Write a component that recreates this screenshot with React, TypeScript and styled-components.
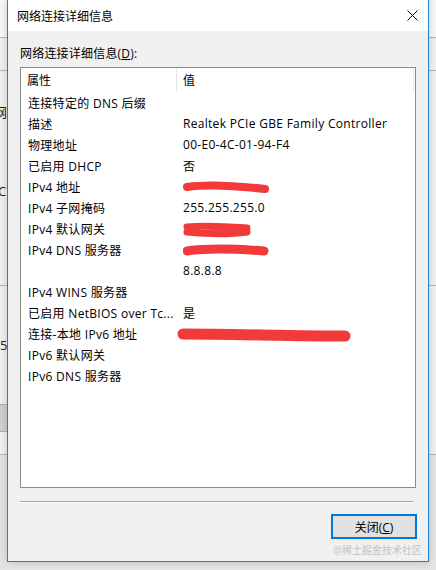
import React from "react";
import styled, { createGlobalStyle } from "styled-components";

const GlobalStyle = createGlobalStyle`
  html, body { margin: 0; padding: 0; }
  body {
    background: #ececec;
    font-family: "Open Sans", "Noto Sans CJK SC", sans-serif;
    font-size: 12px;
    color: #000;
  }
`;

const Desktop = styled.div`
  position: relative;
  width: 436px;
  height: 570px;
  overflow: hidden;
  background: #ececec;
`;

/* window lying behind the dialog */
const BackWindow = styled.div`
  position: absolute;
  inset: 0;
  display: flex;
  flex-direction: column;
  background: #f0f0f0;
`;

const BackBand = styled.div<{ $h: number; $bg?: string; $line?: boolean }>`
  height: ${(p) => p.$h}px;
  flex: none;
  background: ${(p) => p.$bg || "transparent"};
  border-bottom: ${(p) => (p.$line ? "1px solid #b4b4b4" : "none")};
  display: flex;
  align-items: center;
  font-size: 13px;
  color: #222;
  overflow: hidden;
  white-space: nowrap;
`;

const BackText = styled.span<{ $x: number }>`
  margin-left: ${(p) => p.$x}px;
`;

const BackButton = styled.div`
  margin-left: -4px;
  width: 10px;
  height: 26px;
  background: #d0d0d0;
  border: 1px solid #adadad;
`;

const Dialog = styled.div`
  position: absolute;
  left: 7px;
  top: -1px;
  width: 420px;
  height: 561px;
  border: 1px solid #1883d7;
  background: #f0f0f0;
  display: flex;
  flex-direction: column;
  box-shadow: 0 0 8px rgba(0, 0, 0, 0.18);
`;

const TitleBar = styled.div`
  height: 31px;
  flex: none;
  background: #fff;
  display: flex;
  align-items: center;
  justify-content: space-between;
  padding: 0 10px 0 9px;
`;

const Title = styled.span`
  font-size: 12px;
  color: #000;
`;

const CloseGlyph = styled.svg`
  width: 11px;
  height: 11px;
  display: block;
`;

const Body = styled.div`
  flex: 1;
  display: flex;
  flex-direction: column;
  padding: 15px 12px 0 12px;
  position: relative;
`;

const Label = styled.div`
  height: 16px;
  line-height: 16px;
  margin-bottom: 5px;
  letter-spacing: 0.2px;
`;

const ListView = styled.div`
  height: 421px;
  box-sizing: border-box;
  border: 1px solid #8c8c8c;
  background: #fff;
  display: grid;
  grid-template-columns: 156px 1fr;
  grid-auto-rows: 21px;
  grid-template-rows: 24px;
  align-content: start;
`;

const HeaderCell = styled.div<{ $last?: boolean }>`
  display: flex;
  align-items: center;
  padding-left: 6px;
  border-right: 1px solid ${(p) => (p.$last ? "#eaeaea" : "#e5e5e5")};
  margin-right: ${(p) => (p.$last ? 1 : 0)}px;
  white-space: nowrap;
`;

const Cell = styled.div<{ $value?: boolean }>`
  display: flex;
  align-items: center;
  padding-left: ${(p) => (p.$value ? 6 : 7)}px;
  white-space: nowrap;
  overflow: hidden;
  letter-spacing: 0.3px;
`;

const Scribble = styled.svg`
  display: block;
  height: 21px;
`;

const Separator = styled.div`
  margin: 13px 3px 0 0;
  height: 1px;
  background: #a0a0a0;
  border-bottom: 1px solid #fff;
`;

const ButtonRow = styled.div`
  display: flex;
  justify-content: flex-end;
  margin: 11px -1px 0 0;
`;

const Button = styled.button`
  width: 86px;
  height: 25px;
  box-sizing: border-box;
  border: 2px solid #0078d7;
  background: #e1e1e1;
  font-family: inherit;
  font-size: 12px;
  color: #000;
  padding: 0;
`;

const Watermark = styled.div`
  position: absolute;
  right: 6px;
  bottom: 4px;
  font-size: 10px;
  color: #c4c4c4;
`;

const Key = styled.span`
  text-decoration: underline;
`;

const RED = "#f23a3a";

const redacted: Record<string, React.ReactNode> = {
  a: (
    <Scribble width="90" viewBox="0 0 90 21">
      <path d="M4 11 C 25 8, 55 10, 82 13" stroke={RED} strokeWidth="8" strokeLinecap="round" fill="none" />
    </Scribble>
  ),
  b: (
    <Scribble width="80" viewBox="0 0 80 21">
      <path d="M4 9 C 25 7, 50 9, 64 10 M4 14 C 25 16, 50 16, 64 14" stroke={RED} strokeWidth="7" strokeLinecap="round" fill="none" />
    </Scribble>
  ),
  c: (
    <Scribble width="90" viewBox="0 0 90 21">
      <path d="M4 12 C 25 9, 55 10, 81 12" stroke={RED} strokeWidth="9" strokeLinecap="round" fill="none" />
    </Scribble>
  ),
  d: (
    <Scribble width="180" viewBox="0 0 180 21" style={{ marginLeft: -6 }}>
      <path d="M6 11 C 50 11, 120 13, 168 13" stroke={RED} strokeWidth="11" strokeLinecap="round" fill="none" />
    </Scribble>
  ),
};

const rows: [string, string][] = [
  ["连接特定的 DNS 后缀", ""],
  ["描述", "Realtek PCIe GBE Family Controller"],
  ["物理地址", "00-E0-4C-01-94-F4"],
  ["已启用 DHCP", "否"],
  ["IPv4 地址", "#a"],
  ["IPv4 子网掩码", "255.255.255.0"],
  ["IPv4 默认网关", "#b"],
  ["IPv4 DNS 服务器", "#c"],
  ["", "8.8.8.8"],
  ["IPv4 WINS 服务器", ""],
  ["已启用 NetBIOS over Tc...", "是"],
  ["连接-本地 IPv6 地址", "#d"],
  ["IPv6 默认网关", ""],
  ["IPv6 DNS 服务器", ""],
];

export default function App() {
  return (
    <>
      <GlobalStyle />
      <Desktop>
        <BackWindow>
          <BackBand $h={37} $bg="#f7f7f7" $line />
          <BackBand $h={32} $line />
          <BackBand $h={80}>
            <BackText $x={-6}>网络</BackText>
          </BackBand>
          <BackBand $h={80}>
            <BackText $x={-2}>C</BackText>
          </BackBand>
          <BackBand $h={54} $line />
          <BackBand $h={118}>
            <BackText $x={0}>5</BackText>
          </BackBand>
          <BackBand $h={28}>
            <BackButton />
          </BackBand>
          <BackBand $h={22} $line />
          <BackBand $h={120} $bg="#e4e4e4" />
        </BackWindow>

        <Dialog>
          <TitleBar>
            <Title>网络连接详细信息</Title>
            <CloseGlyph viewBox="0 0 11 11">
              <path d="M0.5 0.5 L10.5 10.5 M10.5 0.5 L0.5 10.5" stroke="#000" strokeWidth="1" fill="none" />
            </CloseGlyph>
          </TitleBar>
          <Body>
            <Label>
              网络连接详细信息(<Key>D</Key>):
            </Label>
            <ListView>
              <HeaderCell>属性</HeaderCell>
              <HeaderCell $last>值</HeaderCell>
              {rows.map(([k, v], i) => (
                <React.Fragment key={i}>
                  <Cell>{k}</Cell>
                  <Cell $value>{v.startsWith("#") ? redacted[v.slice(1)] : v}</Cell>
                </React.Fragment>
              ))}
            </ListView>
            <Separator />
            <ButtonRow>
              <Button>
                关闭(<Key>C</Key>)
              </Button>
            </ButtonRow>
            <Watermark>@稀土掘金技术社区</Watermark>
          </Body>
        </Dialog>
      </Desktop>
    </>
  );
}
